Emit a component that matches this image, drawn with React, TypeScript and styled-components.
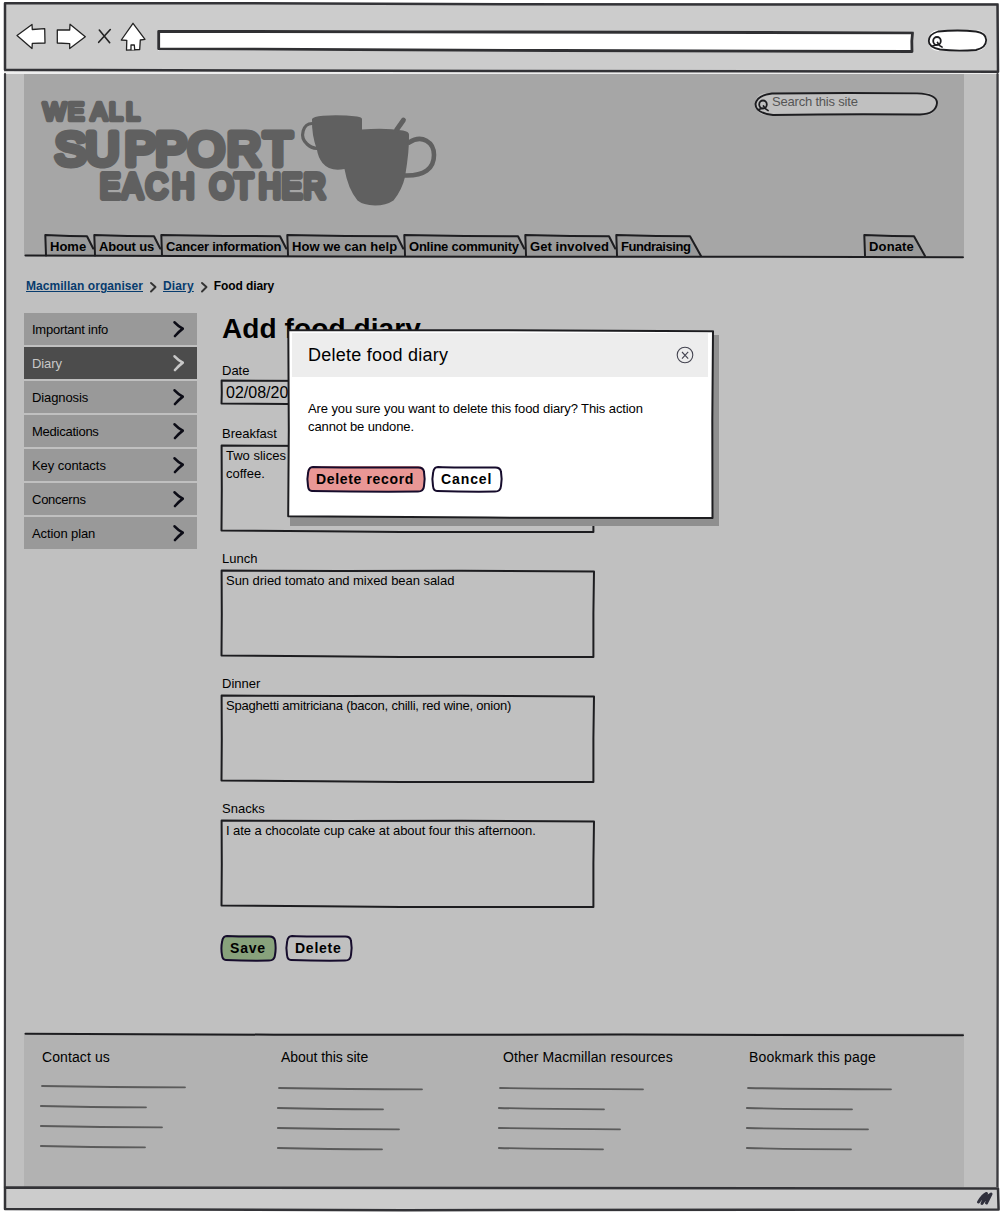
import React from "react";
import styled, { createGlobalStyle } from "styled-components";

const ink = "#1d1d20";

const GlobalStyle = createGlobalStyle`
  * { box-sizing: border-box; }
  html, body { margin: 0; background: #fff; }
  body { font-family: "Liberation Sans", Arial, Helvetica, sans-serif; color: #000; overflow: hidden; }
  h1, h2, h3, p, ul { margin: 0; padding: 0; }
  ul { list-style: none; }
`;

/* Hand-drawn outline laid over the box that owns it. */
const Outline = styled.svg`
  position: absolute;
  inset: 0;
  width: 100%;
  height: 100%;
  overflow: visible;
  pointer-events: none;
  fill: none;
  stroke: ${ink};
  stroke-linecap: round;
  stroke-linejoin: round;
`;

const Label = styled.span<{ $track?: number }>`
  position: relative;
  white-space: pre;
  letter-spacing: ${(p) => p.$track ?? 0}px;
`;

/* ---------- browser window ---------- */

const Window = styled.div`
  width: 995px;
  height: 1211px;
  margin: 3px 0 0 4px;
  display: flex;
  flex-direction: column;
`;

const Toolbar = styled.div`
  position: relative;
  height: 71px;
  flex: none;
  display: flex;
  background: #ccc;
  border-bottom: 2px solid #eee;
  padding-left: 12px;
`;

const ToolIcons = styled.svg`
  width: 136px;
  height: 66px;
  fill: #fff;
  stroke: #222;
  stroke-width: 1.3;
  stroke-linejoin: round;
  stroke-linecap: round;
`;

const AddressBar = styled.div`
  position: relative;
  width: 755px;
  height: 20px;
  margin: 28px 0 0 6px;
  background: #fff;
`;

const BrowserSearch = styled.div`
  position: relative;
  width: 59px;
  height: 21px;
  margin: 27px 0 0 15px;
  border-radius: 12px;
  background: #fff;
`;

const Viewport = styled.div`
  position: relative;
  flex: none;
  height: 1113px;
  padding: 0 35px 0 20px;
  background: #c0c0c0;
  display: flex;
  flex-direction: column;
`;

const StatusBar = styled.div`
  position: relative;
  flex: none;
  height: 23px;
  background: #ccc;
`;

/* ---------- site header ---------- */

const SiteHeader = styled.header`
  position: relative;
  flex: none;
  height: 182px;
  background: #a6a6a6;
  display: flex;
  flex-direction: column;
  justify-content: space-between;
`;

const HeaderTop = styled.div`
  display: flex;
  justify-content: space-between;
  padding-right: 27px;
`;

const Logo = styled.svg`
  width: 424px;
  height: 136px;
  fill: #606060;
  stroke: #606060;
  stroke-linejoin: round;
  stroke-linecap: round;
  text { font-family: "Liberation Sans", Arial, sans-serif; }
`;

const SearchBox = styled.div`
  position: relative;
  width: 182px;
  height: 22px;
  margin-top: 19px;
  padding-left: 17px;
  border-radius: 11px;
  background: #c0c0c0;
  color: #555;
  font-size: 13px;
  line-height: 18px;
`;

const Tabs = styled.nav`
  display: flex;
  height: 21px;
  padding-left: 21px;
`;

const TabBox = styled.a<{ $w: number; $gap?: number }>`
  position: relative;
  width: ${(p) => p.$w}px;
  height: 21px;
  margin-left: ${(p) => p.$gap ?? 0}px;
  padding-left: 5px;
  font-size: 13px;
  font-weight: 700;
  line-height: 24px;
`;

/* ---------- page body ---------- */

const Crumbs = styled.div`
  display: flex;
  align-items: center;
  flex: none;
  height: 20px;
  margin-top: 20px;
  padding-left: 2px;
  font-size: 12px;
  font-weight: 700;
  svg { width: 8px; height: 12px; margin: 1px 6px 0; }
`;

const CrumbLink = styled.a`
  color: #083c6e;
  text-decoration: underline;
  white-space: nowrap;
`;

const Columns = styled.div`
  display: flex;
  flex: none;
  height: 736px;
  padding-top: 16px;
`;

const Sidebar = styled.ul`
  width: 173px;
  margin: 1px 24px 0 0;
  display: flex;
  flex-direction: column;
  gap: 2px;
`;

const SideItem = styled.li<{ $active?: boolean }>`
  height: 32px;
  display: flex;
  align-items: center;
  justify-content: space-between;
  padding: 1px 13px 0 8px;
  font-size: 13px;
  background: ${(p) => (p.$active ? "#4c4c4c" : "#999")};
  color: ${(p) => (p.$active ? "#c8c8c8" : "#000")};
  svg { width: 12px; height: 18px; margin-top: -2px; }
`;

const Form = styled.main`
  width: 373px;
  display: flex;
  flex-direction: column;
`;

const Title = styled.h1`
  height: 50px;
  padding-left: 1px;
  font-size: 28px;
  line-height: 33px;
  letter-spacing: 0.1px;
`;

const FieldLabel = styled.label<{ $h: number }>`
  height: ${(p) => p.$h}px;
  padding-left: 1px;
  font-size: 13px;
  line-height: 18px;
`;

const DateInput = styled.div`
  position: relative;
  height: 25px;
  margin-bottom: 20px;
  padding-left: 5px;
  font-size: 16px;
  line-height: 26px;
`;

const TextArea = styled.div`
  position: relative;
  height: 87px;
  margin-bottom: 18px;
  padding: 2px 0 0 5px;
  font-size: 13px;
  line-height: 18px;
`;

const ButtonRow = styled.div`
  display: flex;
  gap: 10px;
  margin-top: 10px;
`;

const ButtonBox = styled.button<{ $w: number; $bg?: string }>`
  position: relative;
  width: ${(p) => p.$w}px;
  height: 26px;
  padding: 0 0 0 9px;
  border: 0;
  border-radius: 7px;
  background: ${(p) => p.$bg ?? "transparent"};
  color: #000;
  font: 700 14px/27px "Liberation Sans", Arial, sans-serif;
  text-align: left;
`;

/* ---------- footer ---------- */

const SiteFooter = styled.footer`
  position: relative;
  flex: none;
  height: 154px;
  margin-top: 1px;
  padding: 15px 0 0 16px;
  background: #b2b2b2;
  display: grid;
  grid-template-columns: 237px 221px 248px 1fr;
`;

const FooterHeading = styled.h3<{ $indent: number }>`
  height: 18px;
  padding-left: ${(p) => p.$indent}px;
  font-size: 14px;
  font-weight: 400;
  line-height: 18px;
`;

const LinkLines = styled.svg<{ $top: number }>`
  display: block;
  width: 160px;
  height: 80px;
  margin-top: ${(p) => p.$top}px;
  fill: none;
  stroke: #5b5b5b;
  stroke-width: 1.8;
  stroke-linecap: round;
`;

/* ---------- dialog ---------- */

const Dialog = styled.section`
  position: absolute;
  left: 284px;
  top: 256px;
  width: 425px;
  height: 187px;
  padding: 3px 5px 3px 4px;
  background: #fff;
  box-shadow: 4px 7px 0 2px #8f8f8f;
`;

const DialogHeader = styled.header`
  height: 44px;
  display: flex;
  align-items: center;
  justify-content: space-between;
  padding: 0 14px 0 16px;
  background: #ededed;
  h2 { font-size: 18px; font-weight: 400; }
  svg { width: 18px; height: 18px; }
`;

const DialogText = styled.p`
  padding: 23px 16px 0;
  font-size: 13px;
  line-height: 18px;
`;

const DialogButtons = styled.div`
  display: flex;
  gap: 7px;
  padding: 30px 0 0 15px;
`;

/* ---------- pieces ---------- */

const Magnifier = ({ x, y }: { x: number; y: number }) => (
  <g strokeWidth="1.8">
    <ellipse cx={x} cy={y} rx="3.8" ry="4" />
    <path d={`M${x + 0.5} ${y + 1.5}Q${x + 2} ${y + 5} ${x + 5} ${y + 6}M${x - 4.5} ${y + 5}L${x - 1} ${y + 4}`} />
  </g>
);

const Chevron = ({ color }: { color: string }) => (
  <svg viewBox="0 0 12 18" fill="none" stroke={color} strokeWidth="2.6" strokeLinecap="round" strokeLinejoin="round">
    <path d="M2.6 2.3 Q6 6 10.8 8.6 Q7 11.5 3 16" />
  </svg>
);

const CrumbArrow = () => (
  <svg viewBox="0 0 8 12" fill="none" stroke="#333" strokeWidth="1.9" strokeLinecap="round" strokeLinejoin="round">
    <path d="M2 2 L6.5 6 L2 10.5" />
  </svg>
);

/* A tab's slanted edge is cut short where the next tab begins. */
const Tab = ({ w, text, track, gap, last }: { w: number; text: string; track?: number; gap?: number; last?: boolean }) => {
  const edge = last ? `L${w + 4} 21` : `L${w - 0.8} 13.5`;
  return (
    <TabBox $w={w} $gap={gap}>
      <Outline>
        <path d={`M.5 0L${w - 7} 1.2${edge}${last ? "" : `L${w} 21`}L.5 21Z`} fill="#999" stroke="none" />
        <path d={`M1 20.5L.3 0L${w / 2} .9L${w - 7} 1.2${edge}`} strokeWidth="2" />
      </Outline>
      <Label $track={track}>{text}</Label>
    </TabBox>
  );
};

const BoxOutline = ({ h }: { h: number }) => (
  <Outline strokeWidth="2">
    <path d={`M.6 .6L120 1.1L240 .8L373 1.6L372.4 ${h / 2}L372.4 ${h}L180 ${h}L100 ${h - 0.8}L.5 ${h - 1.5}L.8 ${h / 2}Z`} />
  </Outline>
);

const Button = ({ w, text, bg, track }: { w: number; text: string; bg?: string; track: number }) => (
  <ButtonBox $w={w} $bg={bg}>
    <Outline style={{ stroke: "#160c2c" }} strokeWidth="2">
      <path
        d={`M6 .9Q${w / 3} 1.6 ${w - 7} 1.6Q${w - 1.5} 1.5 ${w - 1} 6Q${w + 0.3} 13 ${w - 1} 20Q${w - 1.5} 25.6 ${w - 7} 25.6Q${w / 2} 26 5 25Q1.5 25 1 20Q-.3 13 1.2 6Q2 1 6 .9Z`}
      />
    </Outline>
    <Label $track={track}>{text}</Label>
  </ButtonBox>
);

const Field = ({ label, track, children }: { label: string; track?: number; children: React.ReactNode }) => (
  <>
    <FieldLabel $h={20}>{label}</FieldLabel>
    <TextArea>
      <BoxOutline h={87} />
      <Label $track={track}>{children}</Label>
    </TextArea>
  </>
);

const sideItems = [
  { text: "Important info", track: -0.25 },
  { text: "Diary", track: -0.1 },
  { text: "Diagnosis", track: -0.1 },
  { text: "Medications", track: -0.25 },
  { text: "Key contacts", track: -0.05 },
  { text: "Concerns", track: -0.25 },
  { text: "Action plan", track: -0.1 },
];

const footerColumns = [
  { text: "Contact us", indent: 2, track: 0.1, top: 18 },
  { text: "About this site", indent: 4, track: -0.05, top: 20 },
  { text: "Other Macmillan resources", indent: 5, track: 0.1, top: 20 },
  { text: "Bookmark this page", indent: 3, track: 0.18, top: 20 },
];

export default function App() {
  return (
    <>
      <GlobalStyle />
      <Window>
        <Toolbar>
          <ToolIcons viewBox="16 3 136 66">
            <path d="M17 35.5L32 24.5L32.3 29.5L44.7 28.7L45 43L32.3 43.4L32 48.5Z" />
            <path d="M85.3 36.7L70 24.3L69.7 30L57.3 30L57.3 43L69.7 43.6L69.7 48.5Z" />
            <path d="M99.3 30L109.7 42.7M110.3 29.5L98.7 42.3" strokeWidth="1.6" />
            <path d="M133 23.3L145 39.3L140.3 40L139.7 49.5L126.5 50.2L126.8 40.3L121.3 40Z" />
            <path d="M131 49.7V45H134.3L134.7 49.7" />
          </ToolIcons>
          <AddressBar>
            <Outline style={{ stroke: "#303033" }} strokeWidth="2.8" strokeLinejoin="miter">
              <path d="M.7 .3L250 .8L754.5 1.8L753.8 10L754 20.5L400 19.5L.7 17.8Z" />
            </Outline>
          </AddressBar>
          <BrowserSearch>
            <Outline strokeWidth="1.8">
              <path d="M10 1.5Q30 -.5 48 1.5Q58 3 58.2 10Q58 18 48 20Q28 21.5 12 19.5Q.5 17 .8 11Q1 4 10 1.5Z" />
              <Magnifier x={9} y={11} />
            </Outline>
          </BrowserSearch>
          <Outline style={{ stroke: "#333337" }} strokeWidth="2.5">
            <path d="M1 .3L250 .2L500 1.3L993.5 1.6L994 68.7L500 68L250 67.5L1 66.7Z" />
          </Outline>
        </Toolbar>

        <Viewport>
          <SiteHeader>
            <HeaderTop>
              <Logo viewBox="24 74 424 136">
                <text x="43.3 68 82 91 109.3 126.3" y="119.7" fontSize="24" strokeWidth="4.6">WE ALL</text>
                <text x="55 85.6 124.8 155.5 188 227 263.5" y="164.5" fontSize="47" strokeWidth="7">SUPPORT</text>
                <text
                  transform="scale(.87 1)"
                  x="115 140.6 167.5 198 230 241 269.5 297.5 324 349"
                  y="198"
                  fontSize="35"
                  strokeWidth="6"
                >
                  EACH OTHER
                </text>
                <path
                  stroke="none"
                  d="M312 119Q313 116.5 323 115.7Q340 114.5 357 116.5Q362 117.3 362 119V129.5Q385 127.5 403 130.5Q409 131.5 409 134.5Q409.5 150 405 177Q402 190 393.5 200.5Q386 205.5 375 205.5Q363 205 357.5 200.5Q348 189 344.5 169Q330 172 322.5 163Q318 157 317 150Q311.5 135 312 119Z"
                />
                <g fill="none">
                  <path d="M312.5 123.5C303 123 299 137 307 144Q311 148 317 148.5" strokeWidth="3.2" />
                  <path d="M409 142.5C422 134 434 142 434 155C434 169 424 176 405 175.5" strokeWidth="4.6" />
                  <path d="M396.5 130L403.5 120" strokeWidth="4.8" />
                </g>
              </Logo>
              <SearchBox>
                <Outline strokeWidth="1.9">
                  <path d="M17 .5Q90 -.5 162 .4Q182 1 182 10Q181 21 165 21.5Q90 20.7 18 22Q.5 20 .5 11Q2 2 17 .5Z" />
                  <Magnifier x={8} y={11.5} />
                </Outline>
                <Label $track={-0.2}>Search this site</Label>
              </SearchBox>
            </HeaderTop>
            <Tabs>
              <Tab w={49} text="Home" />
              <Tab w={67} text="About us" track={-0.15} />
              <Tab w={126} text="Cancer information" track={-0.22} />
              <Tab w={117} text="How we can help" track={0.03} />
              <Tab w={121} text="Online community" track={-0.22} />
              <Tab w={91} text="Get involved" track={0.08} />
              <Tab w={81} text="Fundraising" track={-0.45} last />
              <Tab w={57} gap={167} text="Donate" track={0.15} last />
            </Tabs>
            <Outline strokeWidth="2">
              <path d="M1.5 181.4L300 182.6L720 182.7L939 183.2" />
            </Outline>
          </SiteHeader>

          <Crumbs>
            <CrumbLink><Label $track={0.05}>Macmillan organiser</Label></CrumbLink>
            <CrumbArrow />
            <CrumbLink><Label $track={0.15}>Diary</Label></CrumbLink>
            <CrumbArrow />
            <Label $track={-0.1}>Food diary</Label>
          </Crumbs>

          <Columns>
            <Sidebar>
              {sideItems.map((item) => (
                <SideItem key={item.text} $active={item.text === "Diary"}>
                  <Label $track={item.track}>{item.text}</Label>
                  <Chevron color={item.text === "Diary" ? "#c8c8c8" : "#0c0c16"} />
                </SideItem>
              ))}
            </Sidebar>
            <Form>
              <Title>Add food diary</Title>
              <FieldLabel $h={18}>Date</FieldLabel>
              <DateInput>
                <BoxOutline h={25} />
                <Label>02/08/2012</Label>
              </DateInput>
              <Field label="Breakfast">{"Two slices\ncoffee."}</Field>
              <Field label="Lunch" track={-0.04}>Sun dried tomato and mixed bean salad</Field>
              <Field label="Dinner" track={-0.22}>Spaghetti amitriciana (bacon, chilli, red wine, onion)</Field>
              <Field label="Snacks" track={-0.07}>I ate a chocolate cup cake at about four this afternoon.</Field>
              <ButtonRow>
                <Button w={55} text="Save" bg="#88a27c" track={0.8} />
                <Button w={66} text="Delete" track={0.75} />
              </ButtonRow>
            </Form>
          </Columns>

          <SiteFooter>
            {footerColumns.map((col) => (
              <div key={col.text}>
                <FooterHeading $indent={col.indent}>
                  <Label $track={col.track}>{col.text}</Label>
                </FooterHeading>
                <LinkLines $top={col.top} viewBox="0 0 160 80">
                  <path d="M2 2Q70 3.2 145 3.3M.8 22Q50 23.2 106 23.3M.8 42Q60 43.2 122 43.3M.8 62Q50 63.2 105 63.3" />
                </LinkLines>
              </div>
            ))}
            <Outline strokeWidth="2">
              <path d="M1.5 .7L250 1.7L600 1.6L939 2.3" />
            </Outline>
          </SiteFooter>

          <Outline style={{ stroke: "#3c3c40" }} strokeWidth="2.2">
            <path d="M1 0L1.3 500L.8 1113M993.5 0L994 560L993.4 1113" />
          </Outline>

          <Dialog>
            <DialogHeader>
              <h2><Label $track={0.25}>Delete food diary</Label></h2>
              <svg viewBox="0 0 18 18" fill="none" stroke="#444450" strokeWidth="1.1">
                <circle cx="9" cy="9" r="7.8" />
                <path d="M6 6L12.2 12.6M12.2 5.8L6 12.6" />
              </svg>
            </DialogHeader>
            <DialogText>
              <Label $track={-0.1}>{"Are you sure you want to delete this food diary? This action\ncannot be undone."}</Label>
            </DialogText>
            <DialogButtons>
              <Button w={118} text="Delete record" bg="#e99795" track={0.65} />
              <Button w={70} text="Cancel" bg="#fff" track={0.9} />
            </DialogButtons>
            <Outline strokeWidth="2">
              <path d="M.3 .2L200 .2L425 1.3L424.3 90L424.5 188L200 187.6L.2 186.2L.8 100Z" />
            </Outline>
          </Dialog>
        </Viewport>

        <StatusBar>
          <Outline style={{ stroke: "#333337" }} strokeWidth="2.5">
            <path d="M1 .6L250 .8L994 1.6L994.6 22.5L400 23.2L1 22Z" />
            <path d="M974.5 15Q979 8 982.5 6.5L978 16.5Q983 9 987 7L982.5 16" stroke="#30303c" strokeWidth="3" />
          </Outline>
        </StatusBar>
      </Window>
    </>
  );
}
